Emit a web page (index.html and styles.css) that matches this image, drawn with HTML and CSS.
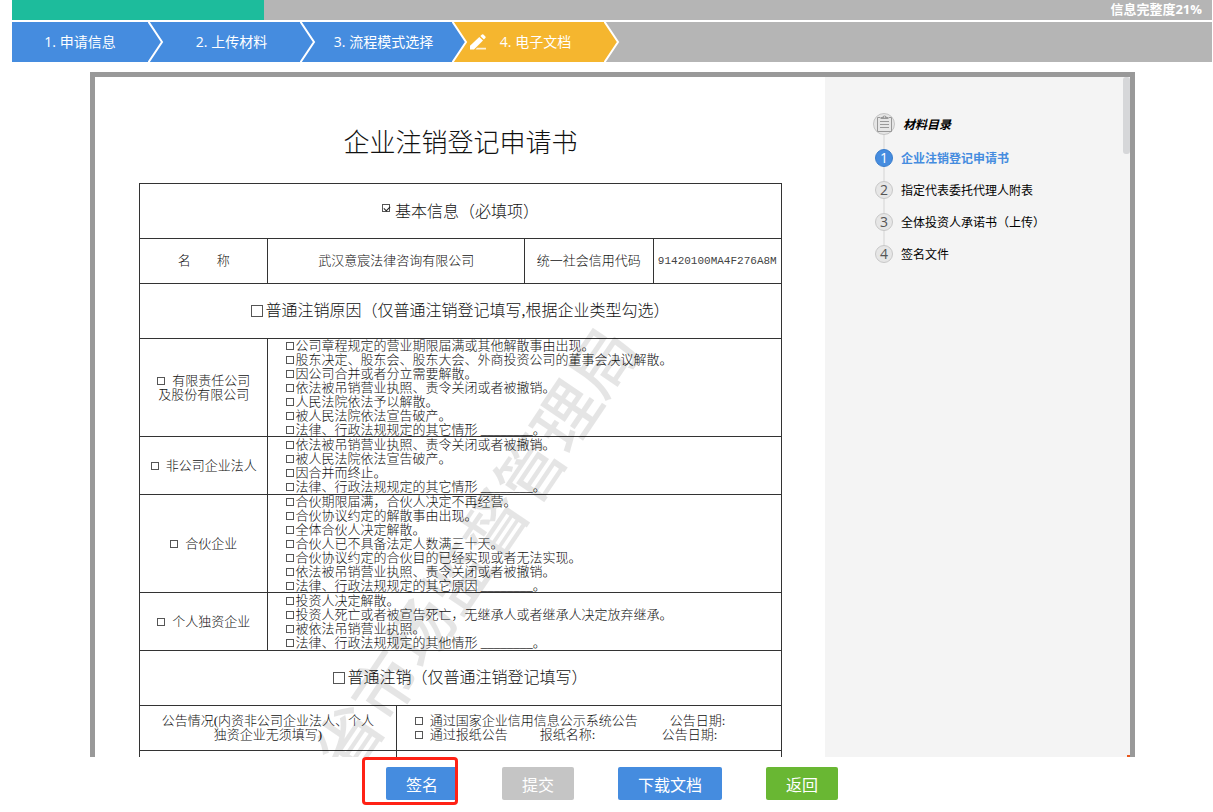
FILE: index.html
```html
<!DOCTYPE html>
<html lang="zh-CN">
<head>
    <meta charset="UTF-8">
    <meta name="viewport" content="width=device-width, initial-scale=1.0">
    <title>电子文档</title>
    <link rel="stylesheet" href="styles.css">
</head>
<body>

    <!-- 信息完整度 -->
    <div class="progress">
        <div class="progress-bar" style="width: 21%"></div>
        <span class="progress-text">信息完整度21%</span>
    </div>

    <!-- 步骤 -->
    <ol class="steps">
        <li class="step">1. 申请信息
            <svg class="step-arrow" viewBox="0 0 16 40"><path d="M0 0L14 20L0 40Z"/><polyline points="0,-1 14,20 0,41"/></svg>
        </li>
        <li class="step">2. 上传材料
            <svg class="step-arrow" viewBox="0 0 16 40"><path d="M0 0L14 20L0 40Z"/><polyline points="0,-1 14,20 0,41"/></svg>
        </li>
        <li class="step">3. 流程模式选择
            <svg class="step-arrow" viewBox="0 0 16 40"><path d="M0 0L14 20L0 40Z"/><polyline points="0,-1 14,20 0,41"/></svg>
        </li>
        <li class="step current">
            <svg class="step-pen" viewBox="0 0 16 16"><path d="M0 15.500V11.800L9.300 2.900L13 6.400L4 15.500Z"/><path d="M10.300 2L12 .4Q12.700 0 13.400 .5L15.400 2.500Q16 3.200 15.400 3.900L13.900 5.400Z"/><path class="pen-line" d="M7 13.800H16V15.500H5.500Z"/></svg>
            4. 电子文档
            <svg class="step-arrow" viewBox="0 0 16 40"><path d="M0 0L14 20L0 40Z"/><polyline points="0,-1 14,20 0,41"/></svg>
        </li>
    </ol>

    <!-- 文档预览 -->
    <div class="viewer">
        <div class="paper">
            <h1 class="paper-title">企业注销登记申请书</h1>
            <table class="form">
                <tr class="row-basic">
                    <td colspan="5" class="section"><label><input type="checkbox" class="box sup" checked> 基本信息（必填项）</label></td>
                </tr>
                <tr class="row-name">
                    <td>名　　称</td>
                    <td colspan="2">武汉意宸法律咨询有限公司</td>
                    <td>统一社会信用代码</td>
                    <td class="code">91420100MA4F276A8M</td>
                </tr>
                <tr class="row-basic">
                    <td colspan="5" class="section"><label><input type="checkbox" class="box big">普通注销原因（仅普通注销登记填写,根据企业类型勾选）</label></td>
                </tr>
                <tr class="row-seven">
                    <td><label><input type="checkbox" class="box wide">有限责任公司<br>及股份有限公司</label></td>
                    <td colspan="4" class="reasons">
                        <ul>
                            <li><label><input type="checkbox" class="box">公司章程规定的营业期限届满或其他解散事由出现。</label></li>
                            <li><label><input type="checkbox" class="box">股东决定、股东会、股东大会、外商投资公司的董事会决议解散。</label></li>
                            <li><label><input type="checkbox" class="box">因公司合并或者分立需要解散。</label></li>
                            <li><label><input type="checkbox" class="box">依法被吊销营业执照、责令关闭或者被撤销。</label></li>
                            <li><label><input type="checkbox" class="box">人民法院依法予以解散。</label></li>
                            <li><label><input type="checkbox" class="box">被人民法院依法宣告破产。</label></li>
                            <li><label><input type="checkbox" class="box">法律、行政法规规定的其它情形 ________。</label></li>
                        </ul>
                    </td>
                </tr>
                <tr class="row-four">
                    <td><label><input type="checkbox" class="box wide">非公司企业法人</label></td>
                    <td colspan="4" class="reasons">
                        <ul>
                            <li><label><input type="checkbox" class="box">依法被吊销营业执照、责令关闭或者被撤销。</label></li>
                            <li><label><input type="checkbox" class="box">被人民法院依法宣告破产。</label></li>
                            <li><label><input type="checkbox" class="box">因合并而终止。</label></li>
                            <li><label><input type="checkbox" class="box">法律、行政法规规定的其它情形 ________。</label></li>
                        </ul>
                    </td>
                </tr>
                <tr class="row-seven">
                    <td><label><input type="checkbox" class="box wide">合伙企业</label></td>
                    <td colspan="4" class="reasons">
                        <ul>
                            <li><label><input type="checkbox" class="box">合伙期限届满，合伙人决定不再经营。</label></li>
                            <li><label><input type="checkbox" class="box">合伙协议约定的解散事由出现。</label></li>
                            <li><label><input type="checkbox" class="box">全体合伙人决定解散。</label></li>
                            <li><label><input type="checkbox" class="box">合伙人已不具备法定人数满三十天。</label></li>
                            <li><label><input type="checkbox" class="box">合伙协议约定的合伙目的已经实现或者无法实现。</label></li>
                            <li><label><input type="checkbox" class="box">依法被吊销营业执照、责令关闭或者被撤销。</label></li>
                            <li><label><input type="checkbox" class="box">法律、行政法规规定的其它原因 ________。</label></li>
                        </ul>
                    </td>
                </tr>
                <tr class="row-four">
                    <td><label><input type="checkbox" class="box wide">个人独资企业</label></td>
                    <td colspan="4" class="reasons">
                        <ul>
                            <li><label><input type="checkbox" class="box">投资人决定解散。</label></li>
                            <li><label><input type="checkbox" class="box">投资人死亡或者被宣告死亡，无继承人或者继承人决定放弃继承。</label></li>
                            <li><label><input type="checkbox" class="box">被依法吊销营业执照。</label></li>
                            <li><label><input type="checkbox" class="box">法律、行政法规规定的其他情形 ________。</label></li>
                        </ul>
                    </td>
                </tr>
                <tr class="row-basic">
                    <td colspan="5" class="section"><label><input type="checkbox" class="box big">普通注销（仅普通注销登记填写）</label></td>
                </tr>
                <tr class="row-name">
                    <td colspan="2">公告情况(内资非公司企业法人、个人<br>独资企业无须填写)</td>
                    <td colspan="3" class="reasons">
                        <label><input type="checkbox" class="box wide">通过国家企业信用信息公示系统公告</label><span class="notice">公告日期:</span><br>
                        <label><input type="checkbox" class="box wide">通过报纸公告</label><span class="notice paper-name">报纸名称:</span><span class="notice">公告日期:</span>
                    </td>
                </tr>
                <tr class="row-seven">
                    <td colspan="2"></td>
                    <td colspan="3"></td>
                </tr>
            </table>
            <div class="watermark">省市场监督管理局</div>
        </div>

        <!-- 材料目录 -->
        <div class="catalog">
            <h2 class="catalog-title">
                <svg class="catalog-icon" viewBox="0 0 22 22">
                    <circle cx="11" cy="11" r="10.500" fill="#e6e6e6" stroke="#c4c4c4"/>
                    <path d="M7 4.500H4.500V18.500H18.500V4.500H16" fill="none" stroke="#999"/>
                    <path d="M7.500 6V4H9.500Q9.500 2.500 11.500 2.500T13.500 4H15.500V6Z" fill="#999"/>
                    <circle cx="11.500" cy="4" r=".7" fill="#e6e6e6"/>
                    <path d="M7 8.500H16M7 11.500H16M7 14.500H16" stroke="#999"/>
                </svg>
                材料目录
            </h2>
            <ol class="catalog-list">
                <li><a href="#" class="active"><span class="num">1</span>企业注销登记申请书</a></li>
                <li><a href="#"><span class="num">2</span>指定代表委托代理人附表</a></li>
                <li><a href="#"><span class="num">3</span>全体投资人承诺书（上传）</a></li>
                <li><a href="#"><span class="num">4</span>签名文件</a></li>
            </ol>
            <div class="scroll-thumb"></div>
            <div class="corner-mark"></div>
        </div>
    </div>

    <!-- 操作按钮 -->
    <div class="actions">
        <div class="highlight"><button type="button" class="btn">签名</button></div>
        <button type="button" class="btn btn-gray">提交</button>
        <button type="button" class="btn">下载文档</button>
        <button type="button" class="btn btn-green">返回</button>
    </div>

</body>
</html>
```

FILE: styles.css
```css
* {
    box-sizing: border-box;
}
body {
    margin: 0 1px 0 12px;
    padding-bottom: 12px;
    font-family: "Open Sans", "Noto Sans CJK SC", sans-serif;
    font-size: 14px;
    background-color: #fff;
    color: #000;
}
ol, ul {
    list-style: none;
    margin: 0;
    padding: 0;
}

/* 信息完整度 */
.progress {
    position: relative;
    height: 20px;
    background-color: #b5b5b5;
}
.progress-bar {
    height: 100%;
    background-color: #1dbc9c;
}
.progress-text {
    position: absolute;
    top: 0;
    right: 10px;
    color: #fff;
    font-size: 13px;
    font-weight: bold;
    line-height: 18px;
}

/* 步骤 */
.steps {
    display: flex;
    height: 40px;
    margin-top: 2px;
    background-color: #b5b5b5;
}
.step {
    position: relative;
    width: 152px;
    padding-left: 15px;
    background-color: #458cdf;
    color: #fff;
    fill: #458cdf;
    line-height: 40px;
    text-align: center;
}
.step:first-child {
    width: 136px;
    padding-left: 0;
}
.step.current {
    background-color: #f5b62f;
    fill: #f5b62f;
}
.step-arrow {
    position: absolute;
    z-index: 1;
    top: 0;
    left: 100%;
    width: 16px;
    height: 40px;
}
.step-arrow polyline {
    fill: none;
    stroke: #fff;
    stroke-width: 2;
}
.step-pen {
    position: absolute;
    top: 12px;
    left: 18px;
    width: 16px;
    height: 16px;
    fill: #fff;
}
.pen-line {
    opacity: 0.8;
}

/* 文档预览 */
.viewer {
    display: flex;
    height: calc(100vh - 127px);
    margin: 10px 77px 0 78px;
    border: 5px solid #999;
    border-bottom: none;
    overflow: hidden;
}
.paper {
    position: relative;
    flex: 1;
    padding: 47px 43px 0 44px;
    overflow: hidden;
    font-family: "Liberation Serif", "Noto Sans CJK SC", serif;
    font-size: 13px;
    font-weight: 300;
    line-height: 14px;
    color: #111;
}
.paper-title {
    margin: 0 0 19px;
    font-size: 26px;
    font-weight: 300;
    line-height: 40px;
    text-align: center;
}
.form {
    width: 100%;
    table-layout: fixed;
    border-collapse: collapse;
}
.form td {
    padding: 0;
    border: 1px solid #333;
    text-align: center;
    white-space: nowrap;
}
.form .section {
    font-size: 16px;
}
.form .code {
    color: #444;
    font-family: "Liberation Mono", monospace;
    font-size: 11px;
}
.form .reasons {
    padding-left: 18px;
    text-align: left;
}
.reasons ul {
    margin-bottom: -1px;
}
.row-basic {
    height: 55px;
}
.row-name {
    height: 45px;
}
.row-seven {
    height: 98px;
}
.row-four {
    height: 58px;
}
.box {
    appearance: none;
    position: relative;
    width: 8px;
    height: 8px;
    margin: 0 1px 0 0;
    border: 1px solid #555;
    vertical-align: 0;
}
.box.wide {
    margin-right: 7px;
}
.box.big {
    width: 12px;
    height: 12px;
    margin-right: 2px;
    vertical-align: -1px;
}
.box.sup {
    vertical-align: 5px;
}
.box:checked::before {
    content: "";
    position: absolute;
    top: 1px;
    left: 1px;
    width: 5px;
    height: 3px;
    border: solid #222;
    border-width: 0 0 1px 1px;
    transform: rotate(-45deg);
}
.notice {
    margin-left: 32px;
}
.paper-name {
    display: inline-block;
    width: 90px;
}
.watermark {
    position: absolute;
    top: 475px;
    left: 383px;
    color: rgba(0, 0, 0, 0.1);
    font-size: 65px;
    font-weight: 500;
    line-height: 65px;
    white-space: nowrap;
    transform: translate(-50%, -50%) rotate(-56deg);
    pointer-events: none;
}

/* 材料目录 */
.catalog {
    position: relative;
    width: 305px;
    padding: 29px 20px 0 48px;
    background-color: #f4f4f4;
    font-size: 12px;
}
.catalog-title {
    display: flex;
    align-items: center;
    gap: 8px;
    height: 36px;
    margin: 0;
    font-size: 12px;
    font-style: italic;
}
.catalog-icon {
    position: relative;
    z-index: 1;
    width: 22px;
    height: 22px;
}
.catalog-list {
    position: relative;
}
.catalog-list::before {
    content: "";
    position: absolute;
    top: -8px;
    bottom: 16px;
    left: 10px;
    width: 2px;
    background-color: #e4e4e4;
}
.catalog-list a {
    position: relative;
    display: flex;
    align-items: center;
    gap: 8px;
    height: 32px;
    padding-left: 2px;
    color: #000;
    text-decoration: none;
}
.catalog-list a.active {
    color: #458cdf;
    font-weight: bold;
}
.num {
    width: 18px;
    height: 18px;
    border: 1px solid #c8c8c8;
    border-radius: 50%;
    background-color: #e6e6e6;
    color: #555;
    font-size: 14px;
    font-weight: normal;
    line-height: 16px;
    text-align: center;
}
.active .num {
    border-color: #3a7dcc;
    background-color: #458cdf;
    color: #fff;
}
.scroll-thumb {
    position: absolute;
    top: 0;
    right: 0;
    width: 7px;
    height: 77px;
    border-radius: 3px;
    background-color: #d6d7d9;
}
.corner-mark {
    position: absolute;
    right: 0;
    bottom: 0;
    width: 3px;
    height: 2px;
    background-color: #e8581c;
}

/* 操作按钮 */
.actions {
    display: flex;
    justify-content: center;
    gap: 44px;
    margin-top: 10px;
}
.btn {
    display: block;
    height: 33px;
    padding: 0 20px;
    border: none;
    border-radius: 2px;
    background-color: #458cdf;
    color: #fff;
    font-family: inherit;
    font-size: 16px;
    cursor: pointer;
}
.btn-gray {
    background-color: #c5c5c5;
}
.btn-green {
    background-color: #69b733;
}
.highlight {
    position: relative;
}
.highlight::after {
    content: "";
    position: absolute;
    top: -10px;
    right: 0;
    bottom: -5px;
    left: -24px;
    border: 3px solid #ff2215;
    border-radius: 4px;
    pointer-events: none;
}
```
